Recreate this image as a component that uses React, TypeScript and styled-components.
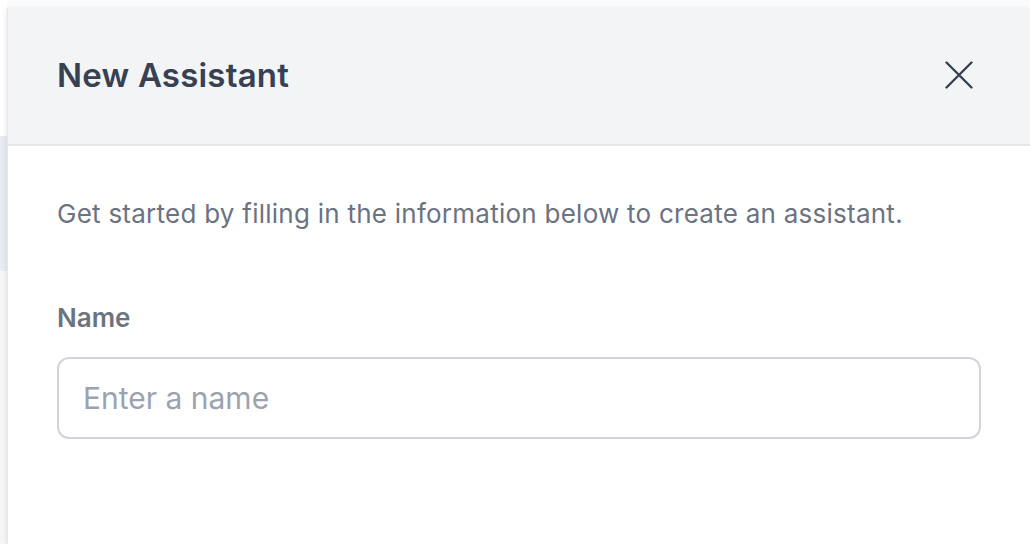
import React from "react";
import styled, { createGlobalStyle } from "styled-components";

const Global = createGlobalStyle`
  html, body { margin: 0; padding: 0; background: #ffffff; }
  body { font-family: Inter, "Noto Sans", sans-serif; -webkit-font-smoothing: antialiased; }
  * { box-sizing: border-box; }
`;

const Page = styled.div`
  display: flex;
  width: 1030px;
  height: 544px;
  overflow: hidden;
  background: #fbfbfc;
`;

const Backdrop = styled.div`
  display: flex;
  flex-direction: column;
  width: 7px;
  flex-shrink: 0;
`;

const BackdropBlock = styled.div<{ $h: number; $bg: string }>`
  height: ${(p) => p.$h}px;
  background: ${(p) => p.$bg};
  flex-shrink: 0;
`;

const Panel = styled.div`
  flex: 1;
  margin-top: 8px;
  display: flex;
  flex-direction: column;
  background: #ffffff;
  box-shadow: -2px 0 4px rgba(0, 0, 0, 0.06);
  border-left: 1px solid #e6e7ea;
`;

const Header = styled.div`
  display: flex;
  align-items: center;
  justify-content: space-between;
  height: 138px;
  padding: 0 50px 3px 49px;
  background: #f3f4f6;
  border-bottom: 2px solid #e5e7eb;
`;

const Title = styled.h2`
  margin: 0;
  font-size: 33px;
  font-weight: 600;
  color: #374151;
  letter-spacing: 0.2px;
`;

const CloseButton = styled.button`
  display: flex;
  align-items: center;
  justify-content: center;
  width: 40px;
  height: 40px;
  padding: 0;
  margin-right: 1px;
  border: none;
  background: transparent;
  color: #374151;
  cursor: pointer;
`;

const Body = styled.div`
  display: flex;
  flex-direction: column;
  padding: 52px 49px 0 49px;
`;

const Description = styled.p`
  margin: 0;
  font-size: 26px;
  line-height: 32px;
  letter-spacing: 0.25px;
  color: #6b7280;
`;

const Field = styled.div`
  display: flex;
  flex-direction: column;
  gap: 23px;
  margin-top: 72px;
`;

const Label = styled.label`
  font-size: 26px;
  font-weight: 600;
  line-height: 32px;
  color: #6b7280;
`;

const Input = styled.input`
  height: 82px;
  width: 100%;
  padding: 0 24px;
  border: 2px solid #d1d5db;
  border-radius: 12px;
  font-family: Inter, "Noto Sans", sans-serif;
  font-size: 30px;
  color: #374151;
  background: #ffffff;
  outline: none;
  &::placeholder { color: #9ca3af; }
`;

export default function App() {
  return (
    <>
      <Global />
      <Page>
        <Backdrop>
          <BackdropBlock $h={136} $bg="#ffffff" />
          <BackdropBlock $h={135} $bg="#e8ebf3" />
          <BackdropBlock $h={273} $bg="#f6f6f8" />
        </Backdrop>
        <Panel>
          <Header>
            <Title>New Assistant</Title>
            <CloseButton aria-label="Close">
              <svg width="28" height="28" viewBox="0 0 28 28" fill="none" stroke="currentColor" strokeWidth="2.4" strokeLinecap="round">
                <path d="M1.5 1.5L26.5 26.5M26.5 1.5L1.5 26.5" />
              </svg>
            </CloseButton>
          </Header>
          <Body>
            <Description>Get started by filling in the information below to create an assistant.</Description>
            <Field>
              <Label>Name</Label>
              <Input placeholder="Enter a name" />
            </Field>
          </Body>
        </Panel>
      </Page>
    </>
  );
}
